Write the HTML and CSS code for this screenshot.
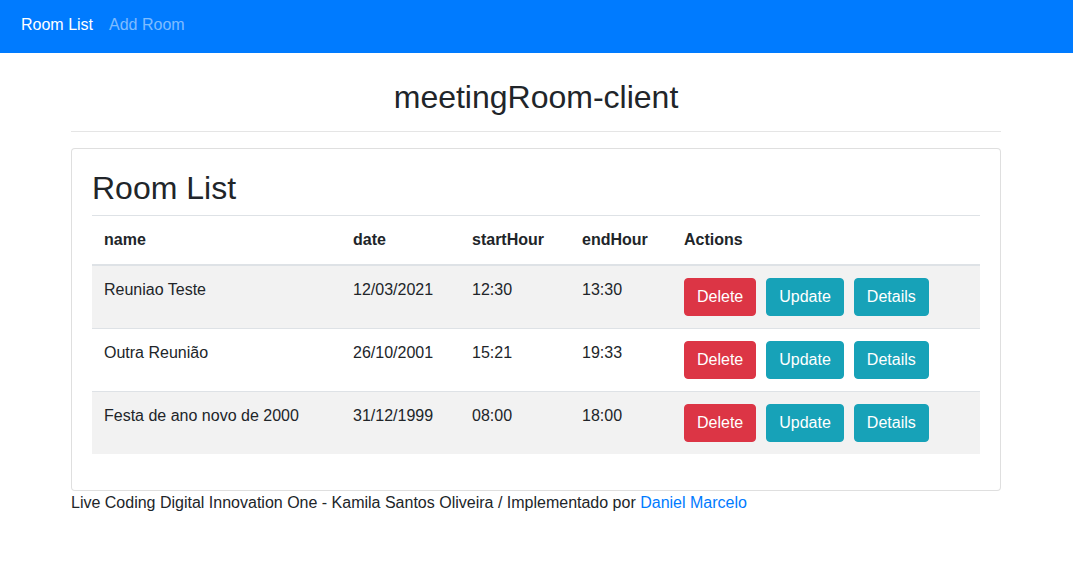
FILE: index.html
```html
<!DOCTYPE html>
<html lang="pt">
<head>
<meta charset="utf-8">
<title>meetingRoom-client</title>
<link rel="stylesheet" href="styles.css">
</head>
<body>
<nav class="navbar">
  <a class="nav-link active" href="#">Room List</a>
  <a class="nav-link" href="#">Add Room</a>
</nav>
<main class="container">
  <h2 class="app-title">meetingRoom-client</h2>
  <hr class="divider">
  <div class="card">
    <div class="card-body">
      <h2 class="card-title">Room List</h2>
      <table class="table">
        <colgroup>
          <col class="c-name"><col class="c-date"><col class="c-start"><col class="c-end"><col class="c-actions">
        </colgroup>
        <thead>
          <tr><th>name</th><th>date</th><th>startHour</th><th>endHour</th><th>Actions</th></tr>
        </thead>
        <tbody>
          <tr class="striped">
            <td>Reuniao Teste</td><td>12/03/2021</td><td>12:30</td><td>13:30</td>
            <td><div class="actions"><button class="btn btn-danger">Delete</button><button class="btn btn-info">Update</button><button class="btn btn-info">Details</button></div></td>
          </tr>
          <tr>
            <td>Outra Reunião</td><td>26/10/2001</td><td>15:21</td><td>19:33</td>
            <td><div class="actions"><button class="btn btn-danger">Delete</button><button class="btn btn-info">Update</button><button class="btn btn-info">Details</button></div></td>
          </tr>
          <tr class="striped">
            <td>Festa de ano novo de 2000</td><td>31/12/1999</td><td>08:00</td><td>18:00</td>
            <td><div class="actions"><button class="btn btn-danger">Delete</button><button class="btn btn-info">Update</button><button class="btn btn-info">Details</button></div></td>
          </tr>
        </tbody>
      </table>
    </div>
  </div>
  <footer class="footer">Live Coding Digital Innovation One - Kamila Santos Oliveira / Implementado por <a href="#" class="link">Daniel Marcelo</a></footer>
</main>
</body>
</html>
```
FILE: styles.css
```css
* { box-sizing: border-box; }
body {
  margin: 0;
  font-family: "Liberation Sans", Arial, Helvetica, sans-serif;
  font-size: 16px;
  line-height: 1.5;
  color: #212529;
  background: #fff;
}
.navbar {
  height: 53px;
  background: #007bff;
  display: flex;
  align-items: center;
  padding: 0 13px 4px;
}
.nav-link {
  color: rgba(255,255,255,.5);
  text-decoration: none;
  padding: 0 8px;
}
.nav-link.active { color: #fff; }
.container {
  width: 930px;
  margin-left: calc(50% - 465.5px);
  padding-top: 25px;
}
.app-title {
  margin: 0;
  font-size: 32px;
  font-weight: 500;
  line-height: 1.2;
  text-align: center;
}
.divider {
  margin: 15px 0 16px;
  border: 0;
  border-top: 1px solid rgba(0,0,0,.1);
  height: 0;
}
.card {
  border: 1px solid rgba(0,0,0,.125);
  border-radius: 4px;
  background: #fff;
}
.card-body { padding: 20px; }
.card-title {
  margin: 0 0 7px;
  font-size: 32px;
  font-weight: 500;
  line-height: 1.2;
}
.table {
  width: 100%;
  border-collapse: collapse;
  table-layout: fixed;
  margin-bottom: 16px;
}
.c-name { width: 249px; }
.c-date { width: 119px; }
.c-start { width: 110px; }
.c-end { width: 102px; }
.c-actions { width: 308px; }
.table th, .table td {
  padding: 12px;
  text-align: left;
  vertical-align: top;
  border-top: 1px solid #dee2e6;
}
.table th { font-weight: 700; }
.table thead th { border-bottom: 2px solid #dee2e6; }
.striped { background: rgba(0,0,0,.05); }
.actions { display: flex; gap: 10px; }
.btn {
  font-family: inherit;
  font-size: 16px;
  line-height: 24px;
  padding: 6px 12px;
  border: 1px solid transparent;
  border-radius: 4px;
  color: #fff;
  cursor: pointer;
}
.btn-danger { background: #dc3545; border-color: #dc3545; }
.btn-info { background: #17a2b8; border-color: #17a2b8; }
.footer { line-height: 24px; }
.link { color: #007bff; text-decoration: none; }
```
